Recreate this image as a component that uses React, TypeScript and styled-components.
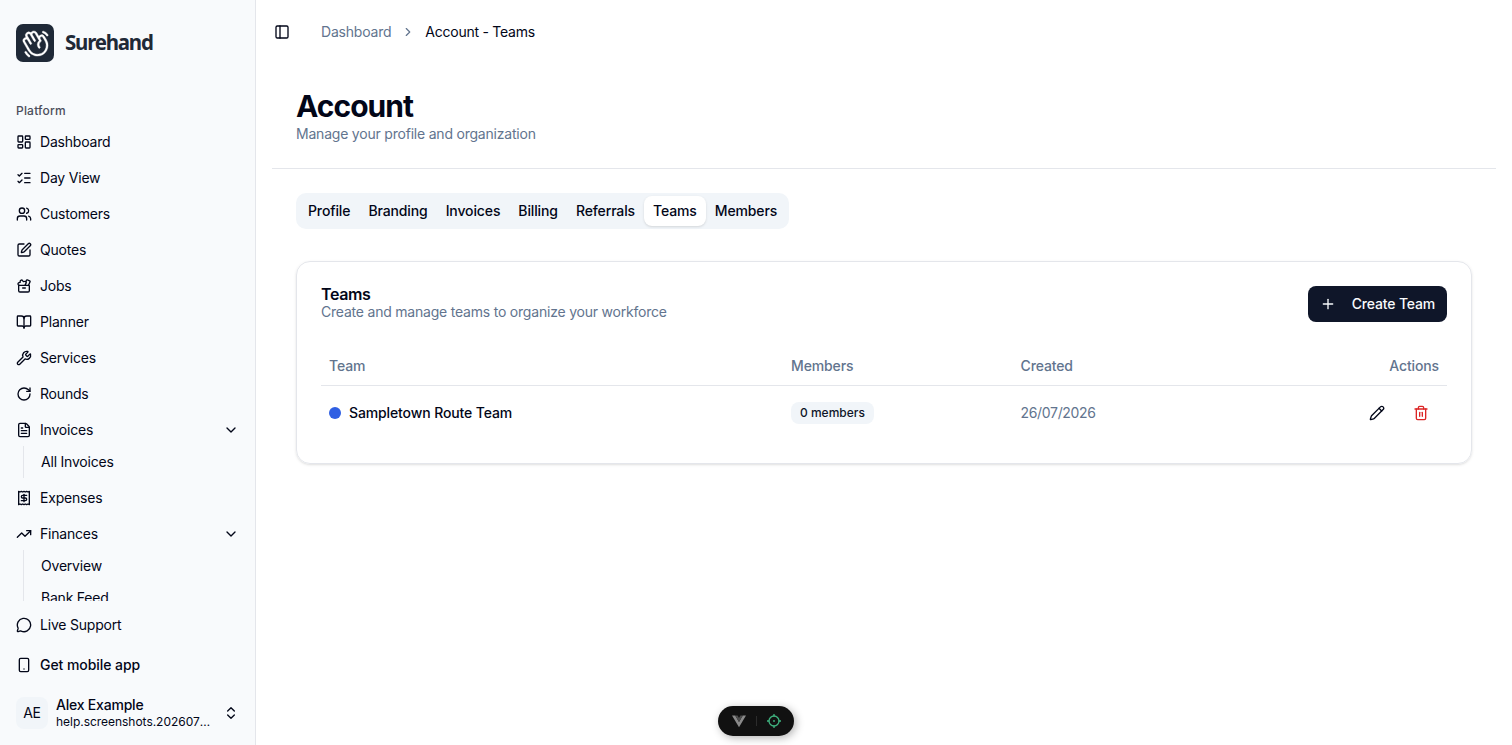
import React from "react";
import styled, { createGlobalStyle, css } from "styled-components";
import {
  BookOpen,
  ChevronDown,
  ChevronRight,
  ChevronsUpDown,
  FileText,
  LayoutDashboard,
  ListChecks,
  MessageCircle,
  PanelLeft,
  Pencil,
  Plus,
  Receipt,
  RotateCw,
  Smartphone,
  SquarePen,
  ToolCase,
  Trash2,
  TrendingUp,
  Users,
  Wrench,
} from "lucide-react";
import type { LucideIcon } from "lucide-react";
import { PiHandWaving } from "react-icons/pi";

const color = {
  ink: "#020618",
  muted: "#62748e",
  line: "#e4e6eb",
  soft: "#f1f5f9",
  primary: "#0f1629",
  danger: "#dc2626",
};

const GlobalStyle = createGlobalStyle`
  *, *::before, *::after { box-sizing: border-box; }
  body {
    margin: 0;
    background: #fff;
    color: ${color.ink};
    font-family: Inter, "Liberation Sans", sans-serif;
    font-size: 14px;
    line-height: 20px;
    letter-spacing: -0.21px;
    overflow: hidden;
  }
  h1, h2, p { margin: 0; }
  button { font: inherit; color: inherit; letter-spacing: inherit; border: 0; background: none; padding: 0; }
  a { color: inherit; text-decoration: none; }
  svg { flex-shrink: 0; }
`;

const Shell = styled.div`
  display: flex;
  height: 745px;
`;

const Sidebar = styled.aside`
  display: flex;
  flex-direction: column;
  width: 256px;
  flex-shrink: 0;
  background: #f8fafc;
  border-right: 1px solid ${color.line};
`;

const Brand = styled.div`
  display: flex;
  align-items: center;
  gap: 11px;
  height: 86px;
  padding: 0 16px;
  flex-shrink: 0;
`;

const BrandMark = styled.div`
  display: grid;
  place-items: center;
  width: 38px;
  height: 38px;
  border-radius: 7px;
  background: #1f2937;
  color: #fff;
`;

const BrandName = styled.span`
  padding-bottom: 4px;
  font-family: "Noto Sans", sans-serif;
  font-weight: 700;
  font-size: 22px;
  line-height: 28px;
  letter-spacing: -1.3px;
  color: #1f2937;
  transform: scaleX(0.93);
  transform-origin: left center;
`;

const NavScroll = styled.nav`
  flex: 1;
  min-height: 0;
  overflow: hidden;
  padding: 8px 8px 0;
`;

const NavLabel = styled.div`
  display: flex;
  align-items: center;
  height: 32px;
  padding: 1px 8px 0;
  font-size: 12px;
  font-weight: 500;
  letter-spacing: 0.2px;
  color: #4b4e5b;
`;

const NavList = styled.div`
  display: flex;
  flex-direction: column;
  gap: 4px;
`;

const NavItem = styled.a<{ $strong?: boolean }>`
  display: flex;
  align-items: center;
  gap: 8px;
  height: 32px;
  padding: 0 8px;
  font-weight: ${(p) => (p.$strong ? 500 : 400)};
  letter-spacing: ${(p) => (p.$strong ? "-0.06px" : "-0.2px")};
  svg:last-child:not(:first-child) { margin-left: auto; }
`;

const SubNav = styled.div`
  display: flex;
  flex-direction: column;
  margin-left: 15px;
  padding-left: 17px;
  border-left: 1px solid ${color.line};
`;

const SubItem = styled.a`
  height: 32px;
  line-height: 32px;
`;

const SidebarFooter = styled.div`
  display: flex;
  flex-direction: column;
  gap: 8px;
  padding: 8px 8px;
  flex-shrink: 0;
  height: 144px;
`;

const UserButton = styled.div`
  display: flex;
  align-items: center;
  gap: 8px;
  height: 48px;
  padding: 0 8px;
`;

const Avatar = styled.div`
  display: grid;
  place-items: center;
  width: 32px;
  height: 32px;
  border-radius: 8px;
  background: ${color.soft};
`;

const UserText = styled.div`
  flex: 1;
  min-width: 0;
  strong { display: block; font-weight: 500; line-height: 18px; }
  span {
    display: block;
    font-size: 12px;
    line-height: 16px;
    letter-spacing: -0.03px;
    overflow: hidden;
    white-space: nowrap;
    text-overflow: ellipsis;
  }
`;

const Main = styled.main`
  flex: 1;
  min-width: 0;
  padding: 0 16px;
`;

const TopBar = styled.header`
  display: flex;
  align-items: center;
  height: 64px;
  padding-left: 2px;
`;

const Crumbs = styled.div`
  display: flex;
  align-items: center;
  gap: 10px;
  margin-left: 31px;
  a { color: ${color.muted}; }
  svg { color: ${color.muted}; }
`;

const CurrentCrumb = styled.span`
  letter-spacing: -0.25px;
`;

const PageHeader = styled.div`
  padding: 25px 24px 24px;
  border-bottom: 1px solid ${color.line};
`;

const PageTitle = styled.h1`
  font-size: 30px;
  line-height: 35px;
  font-weight: 700;
  letter-spacing: -0.95px;
`;

const Muted = styled.p`
  color: ${color.muted};
`;

const Content = styled.div`
  display: flex;
  flex-direction: column;
  align-items: flex-start;
  gap: 32px;
  padding: 24px;
`;

const Tabs = styled.div`
  display: flex;
  height: 36px;
  padding: 3px;
  border-radius: 10px;
  background: ${color.soft};
  letter-spacing: -0.12px;
`;

const Tab = styled.button<{ $active?: boolean }>`
  padding: 0 9px;
  font-weight: 500;
  border-radius: 8px;
  ${(p) =>
    p.$active &&
    css`
      background: #fff;
      box-shadow: 0 1px 3px rgba(0, 0, 0, 0.1), 0 1px 2px -1px rgba(0, 0, 0, 0.1);
    `}
`;

const Card = styled.section`
  width: 100%;
  padding: 24px;
  border: 1px solid ${color.line};
  border-radius: 14px;
  box-shadow: 0 1px 3px rgba(0, 0, 0, 0.1), 0 1px 2px -1px rgba(0, 0, 0, 0.1);
`;

const CardHeader = styled.div`
  display: flex;
  align-items: center;
  justify-content: space-between;
  margin-bottom: 24px;
`;

const CardTitle = styled.h2`
  font-size: 16px;
  line-height: 16px;
  font-weight: 600;
  letter-spacing: -0.35px;
`;

const PrimaryButton = styled.button`
  display: flex;
  align-items: center;
  gap: 16px;
  height: 36px;
  padding: 0 12px;
  border-radius: 8px;
  background: ${color.primary};
  color: #f8fafc;
  font-weight: 500;
  letter-spacing: -0.17px;
`;

const Row = styled.div<{ $head?: boolean }>`
  display: grid;
  grid-template-columns: 462px 229.5px 1fr 160px;
  align-items: center;
  height: ${(p) => (p.$head ? "40px" : "53px")};
  ${(p) =>
    p.$head &&
    css`
      border-bottom: 1px solid ${color.line};
      color: ${color.muted};
      font-weight: 500;
      letter-spacing: -0.13px;
    `}
`;

const Cell = styled.div<{ $end?: boolean; $muted?: boolean }>`
  display: flex;
  align-items: center;
  gap: 8px;
  padding: 0 8px;
  justify-content: ${(p) => (p.$end ? "flex-end" : "flex-start")};
  color: ${(p) => (p.$muted ? color.muted : "inherit")};
`;

const TeamName = styled.span`
  font-weight: 500;
  letter-spacing: -0.12px;
`;

const DateText = styled.span`
  letter-spacing: -0.32px;
`;

const Dot = styled.span`
  width: 12px;
  height: 12px;
  border-radius: 50%;
  background: #2f5fe3;
`;

const Badge = styled.span`
  padding: 3px 9px;
  border-radius: 8px;
  background: ${color.soft};
  color: ${color.primary};
  font-size: 12px;
  line-height: 16px;
  font-weight: 500;
  letter-spacing: 0;
`;

const IconButton = styled.button<{ $danger?: boolean }>`
  display: grid;
  place-items: center;
  width: 36px;
  height: 32px;
  color: ${(p) => (p.$danger ? color.danger : color.ink)};
`;

const DevPill = styled.div`
  position: fixed;
  left: 718px;
  bottom: 9px;
  display: flex;
  align-items: center;
  justify-content: space-between;
  width: 76px;
  height: 30px;
  padding: 0 12px 0 13px;
  border-radius: 15px;
  background: #111;
  box-shadow: 2px 2px 8px rgba(0, 0, 0, 0.3);
`;

const PillDivider = styled.span`
  width: 1px;
  height: 10px;
  background: #2c2c2c;
`;

const mainNav: [LucideIcon, string][] = [
  [LayoutDashboard, "Dashboard"],
  [ListChecks, "Day View"],
  [Users, "Customers"],
  [SquarePen, "Quotes"],
  [ToolCase, "Jobs"],
  [BookOpen, "Planner"],
  [Wrench, "Services"],
  [RotateCw, "Rounds"],
];

const tabs = ["Profile", "Branding", "Invoices", "Billing", "Referrals", "Teams", "Members"];

function NavGroup({ icon: Icon, label, items }: { icon: LucideIcon; label: string; items: string[] }) {
  return (
    <div>
      <NavItem>
        <Icon size={16} />
        {label}
        <ChevronDown size={16} />
      </NavItem>
      <SubNav>
        {items.map((item) => (
          <SubItem key={item}>{item}</SubItem>
        ))}
      </SubNav>
    </div>
  );
}

export default function App() {
  return (
    <>
      <GlobalStyle />
      <Shell>
        <Sidebar>
          <Brand>
            <BrandMark>
              <PiHandWaving size={31} stroke="currentColor" strokeWidth={3} />
            </BrandMark>
            <BrandName>Surehand</BrandName>
          </Brand>
          <NavScroll>
            <NavLabel>Platform</NavLabel>
            <NavList>
              {mainNav.map(([Icon, label]) => (
                <NavItem key={label}>
                  <Icon size={16} />
                  {label}
                </NavItem>
              ))}
              <NavGroup icon={FileText} label="Invoices" items={["All Invoices"]} />
              <NavItem>
                <Receipt size={16} />
                Expenses
              </NavItem>
              <NavGroup icon={TrendingUp} label="Finances" items={["Overview", "Bank Feed"]} />
            </NavList>
          </NavScroll>
          <SidebarFooter>
            <NavItem>
              <MessageCircle size={16} />
              Live Support
            </NavItem>
            <NavItem $strong>
              <Smartphone size={16} />
              Get mobile app
            </NavItem>
            <UserButton>
              <Avatar>AE</Avatar>
              <UserText>
                <strong>Alex Example</strong>
                <span>help.screenshots.20260726@example.com</span>
              </UserText>
              <ChevronsUpDown size={16} />
            </UserButton>
          </SidebarFooter>
        </Sidebar>
        <Main>
          <TopBar>
            <PanelLeft size={16} />
            <Crumbs>
              <a>Dashboard</a>
              <ChevronRight size={14} />
              <CurrentCrumb>Account - Teams</CurrentCrumb>
            </Crumbs>
          </TopBar>
          <PageHeader>
            <PageTitle>Account</PageTitle>
            <Muted>Manage your profile and organization</Muted>
          </PageHeader>
          <Content>
            <Tabs>
              {tabs.map((tab) => (
                <Tab key={tab} $active={tab === "Teams"}>
                  {tab}
                </Tab>
              ))}
            </Tabs>
            <Card>
              <CardHeader>
                <div>
                  <CardTitle>Teams</CardTitle>
                  <Muted>Create and manage teams to organize your workforce</Muted>
                </div>
                <PrimaryButton>
                  <Plus size={16} />
                  Create Team
                </PrimaryButton>
              </CardHeader>
              <Row $head>
                <Cell>Team</Cell>
                <Cell>Members</Cell>
                <Cell>Created</Cell>
                <Cell $end>Actions</Cell>
              </Row>
              <Row>
                <Cell>
                  <Dot />
                  <TeamName>Sampletown Route Team</TeamName>
                </Cell>
                <Cell>
                  <Badge>0 members</Badge>
                </Cell>
                <Cell $muted>
                  <DateText>26/07/2026</DateText>
                </Cell>
                <Cell $end>
                  <IconButton aria-label="Edit team">
                    <Pencil size={16} />
                  </IconButton>
                  <IconButton $danger aria-label="Delete team">
                    <Trash2 size={16} />
                  </IconButton>
                </Cell>
              </Row>
            </Card>
          </Content>
        </Main>
      </Shell>
      <DevPill>
        <svg width="16" height="14" viewBox="0 0 16 14">
          <path d="M1 1.5h3.2L8 8l3.8-6.5H15L8 13.2z" fill="#8a8a8a" />
          <path d="M4.2 1.5h2.4L8 4l1.4-2.5h2.4L8 8z" fill="#4d4d4d" />
        </svg>
        <PillDivider />
        <svg width="16" height="16" viewBox="0 0 16 16" fill="none" stroke="#3fb27f" strokeWidth="1.3">
          <circle cx="8" cy="8" r="5" />
          <path d="M8 1v2.4M8 12.6V15M1 8h2.4M12.6 8H15" />
          <circle cx="8" cy="8" r="0.9" fill="#3fb27f" stroke="none" />
        </svg>
      </DevPill>
    </>
  );
}
